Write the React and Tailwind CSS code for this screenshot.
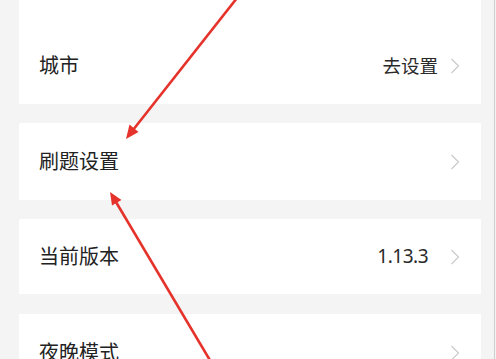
import React from 'react';

const Chevron = () => (
  <svg width="10" height="16" viewBox="0 0 10 16" className="shrink-0">
    <polyline points="1.5,1 8.5,8 1.5,15" fill="none" stroke="#c8c8c8" strokeWidth="1.1" />
  </svg>
);

const Row = ({ label, value, valueGap = 'mr-3' }) => (
  <div className="h-[77px] flex items-center pl-5 pr-[21px]">
    <span className="text-[20px] text-[#222]">{label}</span>
    <div className="ml-auto flex items-center">
      {value && <span className={`text-[18.5px] text-[#2a2a2a] ${valueGap}`}>{value}</span>}
      <Chevron />
    </div>
  </div>
);

const App = () => {
  return (
    <div
      className="relative w-[496px] h-[359px] overflow-hidden bg-[#f4f4f4] flex"
      style={{ fontFamily: '"Noto Sans", "Noto Sans CJK SC", sans-serif' }}
    >
      <div className="w-[481px] pl-[19px] flex flex-col">
        <div className="h-[104px] bg-white flex flex-col justify-end shrink-0">
          <Row label="城市" value="去设置" />
        </div>
        <div className="mt-[19px] bg-white shrink-0">
          <Row label="刷题设置" />
        </div>
        <div className="mt-[19px] bg-white shrink-0">
          <div className="h-[75px] flex items-center pl-5 pr-[21px]">
            <span className="text-[20px] text-[#222]">当前版本</span>
            <div className="ml-auto flex items-center">
              <span className="text-[19px] text-[#2a2a2a] mr-[22px] tracking-[-0.5px]">1.13.3</span>
              <Chevron />
            </div>
          </div>
        </div>
        <div className="mt-[20px] bg-white shrink-0">
          <Row label="夜晚模式" />
        </div>
      </div>
      <div className="ml-auto mr-[1px] w-px bg-[#cfcfcf]" />

      <svg className="absolute inset-0 pointer-events-none" width="496" height="359" viewBox="0 0 496 359">
        <line x1="237" y1="-2" x2="133" y2="130" stroke="#e5322a" strokeWidth="2.6" />
        <polygon points="126,139 138.5,132 129.5,124.5" fill="#e5322a" />
        <line x1="211" y1="362" x2="116" y2="202" stroke="#e5322a" strokeWidth="2.6" />
        <polygon points="110,192 121.5,200 112,205.5" fill="#e5322a" />
      </svg>
    </div>
  );
};

export default App;
